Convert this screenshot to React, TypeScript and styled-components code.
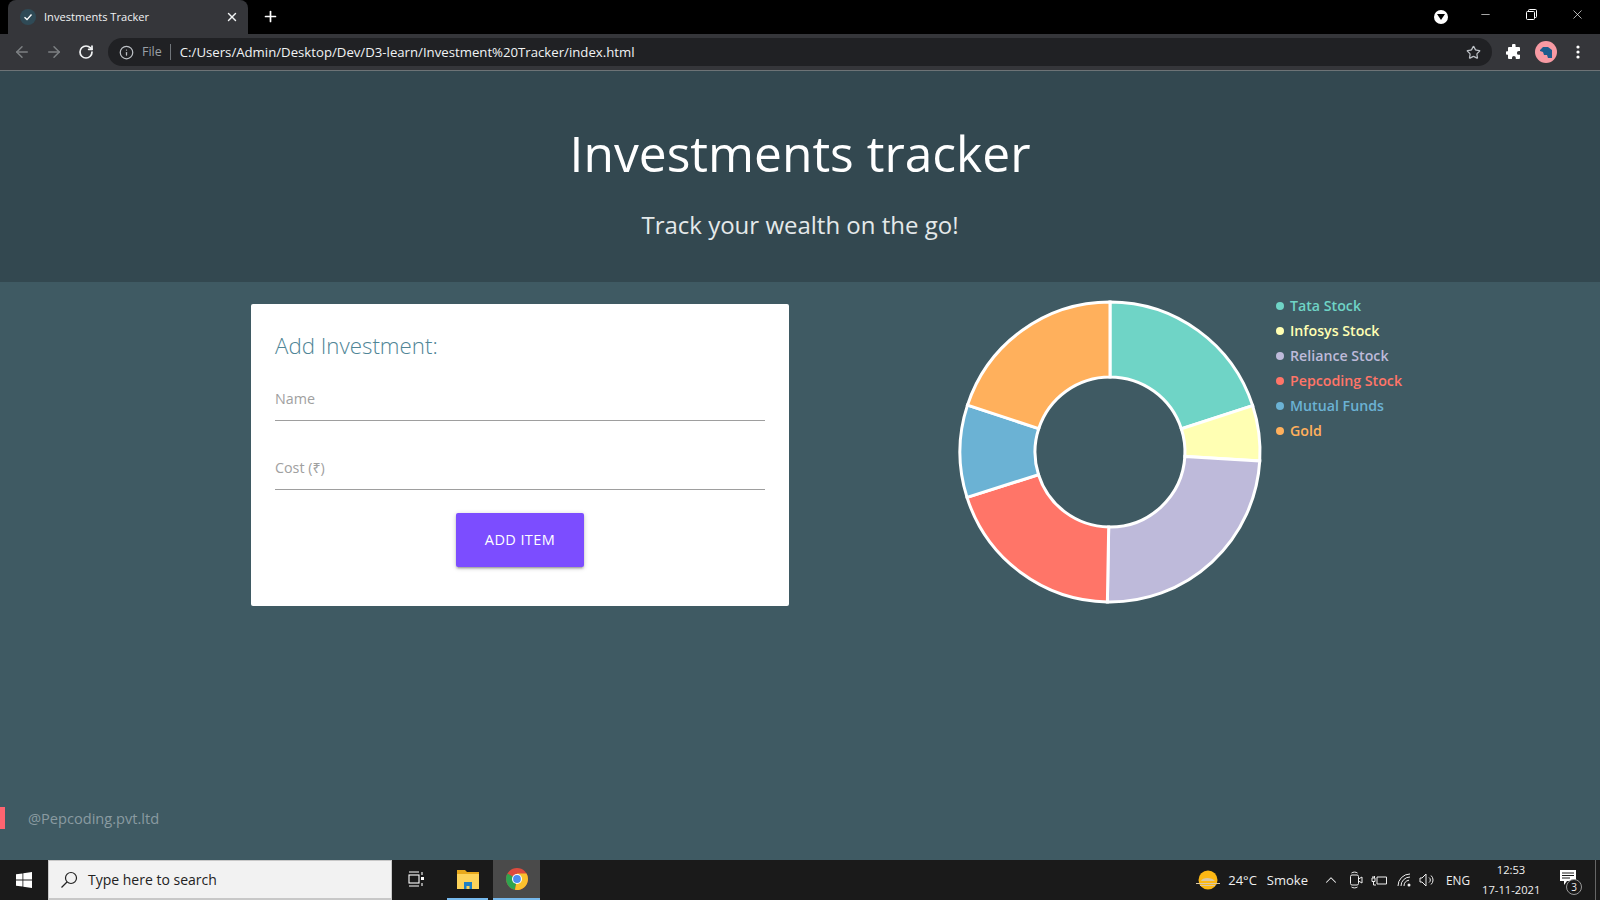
import React from 'react';
import styled, { createGlobalStyle } from 'styled-components';
import { ArrowLeft, ArrowRight, RotateCw, Info, Star, Plus, X, Minus, ChevronUp } from 'lucide-react';

const GlobalStyle = createGlobalStyle`
  html, body {
    margin: 0;
    padding: 0;
    height: 100%;
    overflow: hidden;
    background: #3f5a63;
    font-family: "Open Sans", "Noto Sans", sans-serif;
  }
  * { box-sizing: border-box; }
`;

const Page = styled.div`
  width: 1600px;
  height: 900px;
  display: flex;
  flex-direction: column;
`;

/* browser chrome */
const TabStrip = styled.div`
  height: 34px;
  background: #000;
  display: flex;
  align-items: flex-end;
  padding-left: 8px;
  flex-shrink: 0;
`;

const Tab = styled.div`
  width: 240px;
  height: 34px;
  background: #35363a;
  border-radius: 8px 8px 0 0;
  display: flex;
  align-items: center;
  padding: 0 9px 1px 12px;
  color: #f1f3f4;
  font-size: 11.1px;
`;

const TabIcon = styled.span`
  width: 16px;
  height: 16px;
  border-radius: 50%;
  background: #2f4a56;
  display: flex;
  align-items: center;
  justify-content: center;
  margin-right: 8px;
`;

const TabTitle = styled.span`
  flex: 1;
`;

const NewTab = styled.div`
  width: 44px;
  height: 34px;
  padding-bottom: 1px;
  display: flex;
  align-items: center;
  justify-content: center;
  color: #fff;
`;

const WindowControls = styled.div`
  margin-left: auto;
  height: 34px;
  display: flex;
  align-items: flex-start;
  color: #fff;
`;

const DownloadBadge = styled.span`
  width: 14px;
  height: 14px;
  margin: 10px 14px 0 0;
  border-radius: 50%;
  background: #fff;
  display: flex;
  align-items: center;
  justify-content: center;
`;

const WindowButton = styled.span`
  width: 46px;
  height: 28px;
  display: flex;
  align-items: center;
  justify-content: center;
`;

const Toolbar = styled.div`
  height: 37px;
  background: #35363a;
  border-bottom: 1px solid #6d7376;
  display: flex;
  align-items: center;
  padding: 0 0 0 6px;
  flex-shrink: 0;
`;

const NavButton = styled.span<{ $dim?: boolean }>`
  width: 32px;
  height: 32px;
  display: flex;
  align-items: center;
  justify-content: center;
  color: ${p => (p.$dim ? '#7d8083' : '#f1f3f4')};
`;

const Omnibox = styled.div`
  width: 1384px;
  height: 28px;
  margin-left: 6px;
  margin-right: 6px;
  background: #202124;
  border-radius: 14px;
  display: flex;
  align-items: center;
  padding: 0 11px 0 11px;
  font-size: 13.2px;
`;

const FileLabel = styled.span`
  color: #9aa0a6;
  margin-left: 8px;
  padding-right: 8px;
  border-right: 1px solid #70757a;
  line-height: 16px;
  font-size: 12.5px;
`;

const UrlText = styled.span`
  color: #f1f3f4;
  margin-left: 9px;
`;

const OmniStar = styled.span`
  margin-left: auto;
  color: #bdc1c6;
  display: flex;
`;

const ToolIcon = styled.span`
  width: 32px;
  height: 32px;
  display: flex;
  align-items: center;
  justify-content: center;
`;

const Avatar = styled.span`
  width: 22px;
  height: 22px;
  border-radius: 50%;
  background: #f79aa3;
  display: flex;
  align-items: center;
  justify-content: center;
`;

/* page header */
const Hero = styled.header`
  height: 211px;
  background: #334850;
  color: #fff;
  text-align: center;
  flex-shrink: 0;
  display: flex;
  flex-direction: column;
  align-items: center;
`;

const HeroTitle = styled.h1`
  margin: 47px 0 0;
  font-size: 49.7px;
  line-height: 70px;
  font-weight: 400;
`;

const HeroSub = styled.p`
  margin: 19px 0 0;
  font-size: 24px;
  line-height: 36px;
  font-weight: 400;
  color: #e4e9ea;
`;

/* main content */
const Main = styled.main`
  flex: 1;
  background: #3f5a63;
  display: flex;
  flex-direction: column;
`;

const Columns = styled.section`
  display: flex;
  align-items: flex-start;
  padding: 22px 0 0 251px;
`;

const Card = styled.form`
  width: 538px;
  height: 302px;
  background: #fff;
  border-radius: 2px;
  padding: 25px 24px 24px;
  display: flex;
  flex-direction: column;
`;

const CardTitle = styled.h4`
  margin: 0;
  font-size: 22.3px;
  line-height: 34px;
  font-weight: 300;
  color: #4f8596;
`;

const Field = styled.input`
  display: block;
  width: 100%;
  height: 36px;
  border: none;
  border-bottom: 1px solid #9e9e9e;
  outline: none;
  padding: 0 0 8px;
  background: transparent;
  font-family: inherit;
  font-size: 14.3px;

  &::placeholder {
    color: #a0a0a0;
    opacity: 1;
  }
`;

const NameField = styled(Field)`
  margin-top: 22px;
`;

const CostField = styled(Field)`
  margin-top: 33px;
`;

const AddButton = styled.button`
  align-self: center;
  width: 128px;
  height: 54px;
  margin-top: 23px;
  padding: 0 0 2px;
  border: none;
  border-radius: 2px;
  background: #7c4dff;
  color: #fff;
  font-family: inherit;
  font-size: 14.5px;
  letter-spacing: 0.4px;
  box-shadow: 0 2px 2px 0 rgba(0, 0, 0, 0.14), 0 3px 1px -2px rgba(0, 0, 0, 0.12), 0 1px 5px 0 rgba(0, 0, 0, 0.2);
`;

const Chart = styled.svg`
  width: 306px;
  height: 306px;
  margin: -5px 0 0 168px;
  flex-shrink: 0;
`;

const Legend = styled.ul`
  list-style: none;
  margin: -11px 0 0 13px;
  padding: 0;
`;

const LegendRow = styled.li<{ $color: string }>`
  height: 25px;
  display: flex;
  align-items: center;
  color: ${p => p.$color};
  font-size: 14.2px;
  font-weight: 600;
  white-space: nowrap;

  &::before {
    content: '';
    width: 8px;
    height: 8px;
    border-radius: 50%;
    background: ${p => p.$color};
    margin-right: 6px;
  }
`;

const Footer = styled.footer`
  margin-top: auto;
  margin-bottom: 31px;
  height: 22px;
  border-left: 5px solid #ff6470;
  padding-left: 23px;
  display: flex;
  align-items: center;
  color: #8a9ba1;
  font-size: 14.6px;
  font-weight: 400;
`;

/* windows taskbar */
const Taskbar = styled.div`
  height: 40px;
  background: #1a1a1a;
  display: flex;
  align-items: center;
  color: #f0f0f0;
  flex-shrink: 0;
`;

const StartButton = styled.span`
  width: 48px;
  height: 40px;
  display: flex;
  align-items: center;
  justify-content: center;
`;

const SearchBox = styled.div`
  width: 344px;
  height: 40px;
  background: #f2f2f2;
  border: 1px solid #c8c8c8;
  border-bottom-width: 2px;
  color: #222;
  display: flex;
  align-items: center;
  padding-left: 11px;
  font-size: 14px;
`;

const SearchLabel = styled.span`
  margin-left: 10px;
`;

const TaskIcon = styled.span<{ $width: number; $active?: boolean; $running?: boolean }>`
  width: ${p => p.$width}px;
  height: 40px;
  display: flex;
  align-items: center;
  justify-content: center;
  background: ${p => (p.$active ? '#4a4a4a' : 'transparent')};
  border-bottom: 2px solid ${p => (p.$running ? '#76b9ed' : 'transparent')};
`;

const Tray = styled.div`
  margin-left: auto;
  height: 40px;
  display: flex;
  align-items: center;
  font-size: 13px;
`;

const TrayText = styled.span<{ $gap: number }>`
  margin-left: ${p => p.$gap}px;
  white-space: nowrap;
`;

const LangText = styled(TrayText)`
  font-size: 11.8px;
`;

const TrayIcon = styled.span<{ $gap: number }>`
  margin-left: ${p => p.$gap}px;
  display: flex;
  color: #eee;
`;

const Clock = styled.div`
  width: 58px;
  margin-left: 12px;
  text-align: center;
  font-size: 11.2px;
  line-height: 20px;
  white-space: nowrap;
`;

const NoticeBox = styled.span`
  position: relative;
  width: 56px;
  height: 40px;
  margin-right: 4px;
  border-right: 1px solid #666;
  display: flex;
  align-items: center;
  justify-content: center;
`;

const NoticeCount = styled.span`
  position: absolute;
  right: 13px;
  bottom: 5px;
  width: 16px;
  height: 16px;
  border-radius: 50%;
  border: 1px solid #999;
  background: #1a1a1a;
  font-size: 10px;
  line-height: 14px;
  text-align: center;
`;

const slices = [
  { name: 'Tata Stock', color: '#6fd4c6', from: 0, to: 72 },
  { name: 'Infosys Stock', color: '#ffffb3', from: 72, to: 93.4 },
  { name: 'Reliance Stock', color: '#bebada', from: 93.4, to: 181 },
  { name: 'Pepcoding Stock', color: '#ff7568', from: 181, to: 252.4 },
  { name: 'Mutual Funds', color: '#6bb2d4', from: 252.4, to: 288.2 },
  { name: 'Gold', color: '#ffb05c', from: 288.2, to: 360 },
];

const arcPath = (from: number, to: number, outer: number, inner: number) => {
  const pt = (deg: number, r: number) => {
    const a = (deg * Math.PI) / 180;
    return `${(r * Math.sin(a)).toFixed(2)} ${(-r * Math.cos(a)).toFixed(2)}`;
  };
  const large = to - from > 180 ? 1 : 0;
  return `M${pt(from, outer)}A${outer} ${outer} 0 ${large} 1 ${pt(to, outer)}L${pt(to, inner)}A${inner} ${inner} 0 ${large} 0 ${pt(from, inner)}Z`;
};

const App: React.FC = () => {
  return (
    <Page>
      <GlobalStyle />
      <TabStrip>
        <Tab>
          <TabIcon>
            <svg width="10" height="10" viewBox="0 0 10 10" fill="none" stroke="#fff" strokeWidth="1.4">
              <path d="M1.5 5.3 4 7.6 8.5 2.5" />
            </svg>
          </TabIcon>
          <TabTitle>Investments Tracker</TabTitle>
          <X size={14} strokeWidth={2.4} />
        </Tab>
        <NewTab>
          <Plus size={17} strokeWidth={2.4} />
        </NewTab>
        <WindowControls>
          <DownloadBadge>
            <svg width="8" height="6" viewBox="0 0 8 6"><path d="M0 0h8L4 6z" fill="#000" /></svg>
          </DownloadBadge>
          <WindowButton><Minus size={13} strokeWidth={1.2} /></WindowButton>
          <WindowButton>
            <svg width="11" height="11" viewBox="0 0 11 11" fill="none" stroke="#fff" strokeWidth="1">
              <rect x="0.5" y="2.5" width="8" height="8" rx="1" />
              <path d="M2.5 2.5V1.5a1 1 0 0 1 1-1h6a1 1 0 0 1 1 1v6a1 1 0 0 1-1 1H8.5" />
            </svg>
          </WindowButton>
          <WindowButton><X size={15} strokeWidth={1.1} /></WindowButton>
        </WindowControls>
      </TabStrip>

      <Toolbar>
        <NavButton $dim><ArrowLeft size={18} /></NavButton>
        <NavButton $dim><ArrowRight size={18} /></NavButton>
        <NavButton><RotateCw size={16} strokeWidth={2.6} /></NavButton>
        <Omnibox>
          <Info size={15} color="#bdc1c6" />
          <FileLabel>File</FileLabel>
          <UrlText>C:/Users/Admin/Desktop/Dev/D3-learn/Investment%20Tracker/index.html</UrlText>
          <OmniStar><Star size={15} /></OmniStar>
        </Omnibox>
        <ToolIcon>
          <svg width="16" height="16" viewBox="0 0 16 16">
            <path d="M6 1.5a1.8 1.8 0 0 1 3.6 0V3H13a1 1 0 0 1 1 1v3h-1.2a1.9 1.9 0 0 0 0 3.8H14V14a1 1 0 0 1-1 1H9.8v-1.2a1.9 1.9 0 0 0-3.8 0V15H3a1 1 0 0 1-1-1v-3.2H.8a1.9 1.9 0 0 1 0-3.6H2V4a1 1 0 0 1 1-1h3z" fill="#fff" />
          </svg>
        </ToolIcon>
        <ToolIcon>
          <Avatar>
            <svg width="14" height="13" viewBox="0 0 14 13">
              <path d="M1 4 4 1h5l4 3v8H9l-1-3H5L4 6 1 5z" fill="#1c5c8c" />
            </svg>
          </Avatar>
        </ToolIcon>
        <ToolIcon>
          <svg width="4" height="14" viewBox="0 0 4 14" fill="#fff">
            <circle cx="2" cy="2" r="1.6" />
            <circle cx="2" cy="7" r="1.6" />
            <circle cx="2" cy="12" r="1.6" />
          </svg>
        </ToolIcon>
      </Toolbar>

      <Hero>
        <HeroTitle>Investments tracker</HeroTitle>
        <HeroSub>Track your wealth on the go!</HeroSub>
      </Hero>

      <Main>
        <Columns>
          <Card>
            <CardTitle>Add Investment:</CardTitle>
            <NameField placeholder="Name" />
            <CostField placeholder="Cost (₹)" />
            <AddButton type="button">ADD ITEM</AddButton>
          </Card>
          <Chart viewBox="-153 -153 306 306">
            {slices.map(s => (
              <path key={s.name} d={arcPath(s.from, s.to, 150, 75)} fill={s.color} stroke="#fff" strokeWidth={3} />
            ))}
          </Chart>
          <Legend>
            {slices.map(s => (
              <LegendRow key={s.name} $color={s.color}>{s.name}</LegendRow>
            ))}
          </Legend>
        </Columns>
        <Footer>@Pepcoding.pvt.ltd</Footer>
      </Main>

      <Taskbar>
        <StartButton>
          <svg width="16" height="16" viewBox="0 0 16 16" fill="#fff">
            <path d="M0 2.3 6.5 1.4v6.2H0zM7.3 1.3 16 0v7.6H7.3zM0 8.4h6.5v6.2L0 13.7zM7.3 8.4H16V16l-8.7-1.3z" />
          </svg>
        </StartButton>
        <SearchBox>
          <svg width="18" height="18" viewBox="0 0 18 18" fill="none" stroke="#222" strokeWidth="1.2">
            <circle cx="11" cy="7" r="5.5" />
            <path d="M7 11 1.5 16.5" />
          </svg>
          <SearchLabel>Type here to search</SearchLabel>
        </SearchBox>
        <TaskIcon $width={48}>
          <svg width="16" height="16" viewBox="0 0 16 16" fill="none" stroke="#fff" strokeWidth="1.1">
            <path d="M1 1h10M1 15h10" />
            <rect x="1" y="4" width="10" height="8" />
            <path d="M14 1v3M14 12v3" />
            <rect x="13" y="6" width="3" height="3" fill="#fff" stroke="none" />
          </svg>
        </TaskIcon>
        <TaskIcon $width={7} />
        <TaskIcon $width={41} $running>
          <svg width="22" height="20" viewBox="0 0 22 20">
            <path d="M0 1h8l2 2h12v3H0z" fill="#e8a91c" />
            <rect y="5" width="22" height="15" fill="#fdd35a" />
            <path d="M7 13h8v7h-2.500v-3h-3v3H7z" fill="#1f7fc4" />
          </svg>
        </TaskIcon>
        <TaskIcon $width={5} />
        <TaskIcon $width={47} $active $running>
          <svg width="22" height="22" viewBox="0 0 22 22">
            <circle cx="11" cy="11" r="11" fill="#dd4b3e" />
            <path d="M11 11 1.5 5.500A11 11 0 0 0 9 21.800z" fill="#2ea44f" />
            <path d="M11 11l-2 10.800A11 11 0 0 0 22 11 11 11 0 0 0 20.500 5.500H11z" fill="#fbc02d" />
            <circle cx="11" cy="11" r="5" fill="#fff" />
            <circle cx="11" cy="11" r="3.900" fill="#4b8cf0" />
          </svg>
        </TaskIcon>
        <Tray>
          <TrayIcon $gap={0}>
            <svg width="24" height="20" viewBox="0 0 24 20">
              <circle cx="12" cy="10" r="9.500" fill="#fdb813" />
              <path d="M0 13h24v1H0zM4 15h15v1H4zM5 11c1-4 11-4 14 0z" fill="#d9c7a6" />
            </svg>
          </TrayIcon>
          <TrayText $gap={8}>24°C</TrayText>
          <TrayText $gap={10}>Smoke</TrayText>
          <TrayIcon $gap={14}><ChevronUp size={18} strokeWidth={1.4} /></TrayIcon>
          <TrayIcon $gap={9}>
            <svg width="14" height="18" viewBox="0 0 14 18" fill="none" stroke="#eee" strokeWidth="1">
              <rect x="1.500" y="4" width="8" height="10" rx="1.500" />
              <path d="m9.500 8 3.500-2v6l-3.500-2M2.500 2C4 .8 7 .8 8.500 2M2.500 16c1.500 1.200 4.500 1.200 6 0" />
            </svg>
          </TrayIcon>
          <TrayIcon $gap={8}>
            <svg width="16" height="14" viewBox="0 0 16 14" fill="none" stroke="#eee" strokeWidth="1">
              <path d="M6 4h9.500v7H6V4M1 5h3v3.500H1zM2 5V3M3.500 5V3M2.500 8.500V12H5" />
            </svg>
          </TrayIcon>
          <TrayIcon $gap={10}>
            <svg width="16" height="14" viewBox="0 0 16 14" fill="none" stroke="#eee" strokeWidth="1">
              <path d="M1 13A12 12 0 0 1 13 1M4 13a9 9 0 0 1 9-9M7 13a6 6 0 0 1 5-5.800" />
              <circle cx="12" cy="12" r="1.500" fill="#eee" stroke="none" />
            </svg>
          </TrayIcon>
          <TrayIcon $gap={6}>
            <svg width="16" height="14" viewBox="0 0 16 14" fill="none" stroke="#eee" strokeWidth="1">
              <path d="M1 5v4h2l4 4V1L3 5zM10 4.500a3 3 0 0 1 0 5M12 2.500a6 6 0 0 1 0 9" />
            </svg>
          </TrayIcon>
          <LangText $gap={11}>ENG</LangText>
          <Clock>12:53<br />17-11-2021</Clock>
          <NoticeBox>
            <svg width="18" height="16" viewBox="0 0 18 16" fill="#fff" style={{ marginBottom: 4 }}>
              <path d="M1 0h16v11H8l-3 4v-4H1z" />
              <path d="M3 3h12M3 5.500h12M3 8h8" stroke="#1a1a1a" strokeWidth="1" />
            </svg>
            <NoticeCount>3</NoticeCount>
          </NoticeBox>
        </Tray>
      </Taskbar>
    </Page>
  );
};

export default App;
